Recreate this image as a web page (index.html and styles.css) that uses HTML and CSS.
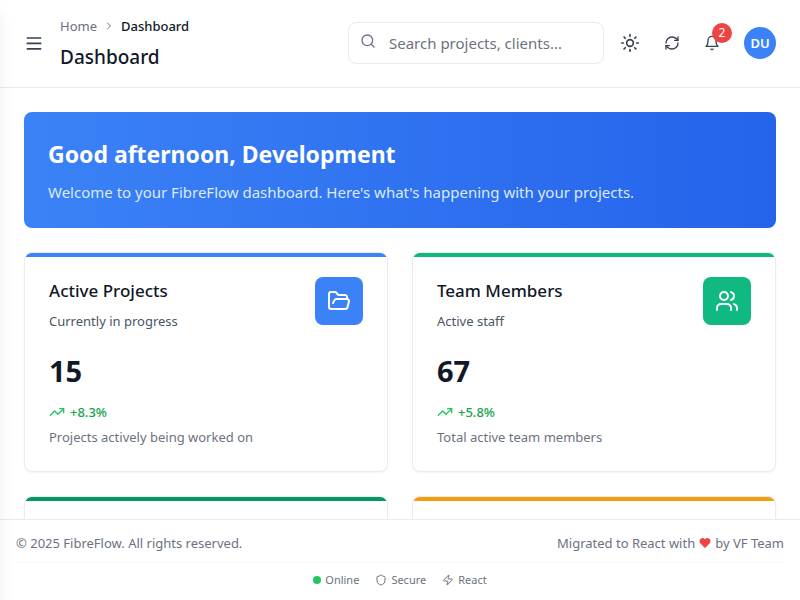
FILE: index.html
```html
<!DOCTYPE html>
<html lang="en">
<head>
<meta charset="utf-8">
<meta name="viewport" content="width=device-width, initial-scale=1">
<title>Dashboard</title>
<link rel="stylesheet" href="styles.css">
</head>
<body>
<svg class="sprite" aria-hidden="true">
  <symbol id="trend" viewBox="0 0 24 24"><path d="M22 7 13.5 15.5 8.5 10.5 2 17"/><path d="M16 7h6v6"/></symbol>
</svg>
<div class="sidebar-edge"></div>
<div class="app">
  <header class="topbar">
    <div class="topbar-left">
      <button class="icon-button" type="button" aria-label="Menu">
        <svg class="icon icon-20" viewBox="0 0 24 24"><path d="M4 6h16M4 12.500h16M4 19h16"/></svg>
      </button>
      <div class="heading">
        <nav class="breadcrumb" aria-label="Breadcrumb">
          <a href="#">Home</a>
          <svg class="icon icon-12" viewBox="0 0 24 24"><path d="m9 18 6-6-6-6"/></svg>
          <span class="current">Dashboard</span>
        </nav>
        <h1 class="page-title">Dashboard</h1>
      </div>
    </div>
    <div class="topbar-right">
      <div class="search">
        <svg class="icon icon-16 search-icon" viewBox="0 0 24 24"><circle cx="11" cy="11" r="8"/><path d="m21 21-4.3-4.3"/></svg>
        <input class="search-input" type="text" placeholder="Search projects, clients..." aria-label="Search">
      </div>
      <div class="actions">
        <button class="icon-button" type="button" aria-label="Theme">
          <svg class="icon icon-20" viewBox="0 0 24 24"><circle cx="12" cy="12" r="4"/><path d="M12 2v2M12 20v2M4.93 4.93l1.41 1.41M17.66 17.66l1.41 1.41M2 12h2M20 12h2M6.34 17.66l-1.41 1.41M19.07 4.93l-1.41 1.41"/></svg>
        </button>
        <button class="icon-button" type="button" aria-label="Refresh">
          <svg class="icon icon-16" viewBox="0 0 24 24"><path d="M3 12a9 9 0 0 1 9-9 9.75 9.75 0 0 1 6.74 2.74L21 8"/><path d="M21 3v5h-5"/><path d="M21 12a9 9 0 0 1-9 9 9.75 9.75 0 0 1-6.74-2.74L3 16"/><path d="M8 16H3v5"/></svg>
        </button>
        <button class="icon-button bell" type="button" aria-label="Notifications">
          <svg class="icon icon-16" viewBox="0 0 24 24"><path d="M6 8a6 6 0 0 1 12 0c0 7 3 9 3 9H3s3-2 3-9"/><path d="M10.3 21a1.94 1.94 0 0 0 3.4 0"/></svg>
          <span class="badge">2</span>
        </button>
        <button class="avatar" type="button">DU</button>
      </div>
    </div>
  </header>

  <main class="content">
    <section class="banner">
      <h2>Good afternoon, Development</h2>
      <p>Welcome to your FibreFlow dashboard. Here's what's happening with your projects.</p>
    </section>
    <div class="cards">
      <article class="card blue">
        <div class="card-head">
          <div>
            <h3>Active Projects</h3>
            <p class="subtitle">Currently in progress</p>
          </div>
          <span class="tile"><svg class="icon icon-24" viewBox="0 0 24 24"><path d="m6 14 1.5-2.9A2 2 0 0 1 9.24 10H20a2 2 0 0 1 1.94 2.5l-1.54 6a2 2 0 0 1-1.95 1.5H4a2 2 0 0 1-2-2V5a2 2 0 0 1 2-2h3.9a2 2 0 0 1 1.69.9l.81 1.2a2 2 0 0 0 1.67.9H18a2 2 0 0 1 2 2v2"/></svg></span>
        </div>
        <p class="value">15</p>
        <p class="trend"><svg class="icon icon-16"><use href="#trend"/></svg>+8.3%</p>
        <p class="note">Projects actively being worked on</p>
      </article>
      <article class="card green">
        <div class="card-head">
          <div>
            <h3>Team Members</h3>
            <p class="subtitle">Active staff</p>
          </div>
          <span class="tile"><svg class="icon icon-24" viewBox="0 0 24 24"><path d="M16 21v-2a4 4 0 0 0-4-4H6a4 4 0 0 0-4 4v2"/><circle cx="9" cy="7" r="4"/><path d="M22 21v-2a4 4 0 0 0-3-3.87"/><path d="M16 3.13a4 4 0 0 1 0 7.75"/></svg></span>
        </div>
        <p class="value">67</p>
        <p class="trend"><svg class="icon icon-16"><use href="#trend"/></svg>+5.8%</p>
        <p class="note">Total active team members</p>
      </article>
      <article class="card teal"></article>
      <article class="card amber"></article>
    </div>
  </main>

  <footer class="footer">
    <div class="footer-main">
      <span>© 2025 FibreFlow. All rights reserved.</span>
      <span class="credit">Migrated to React with
        <svg class="heart" viewBox="0 0 24 24" role="img" aria-label="love"><path d="M12 22 3.500 13.500C1.500 11.500 1 10 1 8a6 6 0 0 1 11-3.300A6 6 0 0 1 23 8c0 2-.5 3.500-2.500 5.500Z"/></svg>
        by VF Team</span>
    </div>
    <div class="status">
      <span class="status-item"><i class="dot"></i>Online</span>
      <span class="status-item"><svg class="icon icon-12" viewBox="0 0 24 24"><path d="M20 13c0 5-3.500 7.500-7.660 8.950a1 1 0 0 1-.67-.01C7.500 20.500 4 18 4 13V6a1 1 0 0 1 1-1c2 0 4.500-1.200 6.240-2.720a1.170 1.170 0 0 1 1.520 0C14.510 3.810 17 5 19 5a1 1 0 0 1 1 1z"/></svg>Secure</span>
      <span class="status-item"><svg class="icon icon-12" viewBox="0 0 24 24"><path d="M4 14a1 1 0 0 1-.78-1.630l9.900-10.200a.5.5 0 0 1 .86.46l-1.920 6.020A1 1 0 0 0 13 10h7a1 1 0 0 1 .78 1.630l-9.900 10.200a.5.5 0 0 1-.86-.46l1.920-6.020A1 1 0 0 0 11 14z"/></svg>React</span>
    </div>
  </footer>
</div>
</body>
</html>
```
FILE: styles.css
```css
* { box-sizing: border-box; }
body {
  margin: 0;
  font-family: "Segoe UI", "Noto Sans", "Open Sans", sans-serif;
  font-size: 13px;
  line-height: 20px;
  color: #111827;
  background: #fff;
}
h1, h2, h3, p { margin: 0; }
button { font: inherit; border: 0; padding: 0; background: none; color: inherit; cursor: pointer; }
.sprite { position: absolute; width: 0; height: 0; }

.app { display: flex; flex-direction: column; height: 100vh; }
.sidebar-edge {
  position: fixed;
  top: 0;
  bottom: 0;
  left: -256px;
  width: 256px;
  z-index: 2;
  box-shadow: 0 10px 15px rgba(0, 0, 0, 0.06);
  pointer-events: none;
}

.icon { display: block; flex: none; fill: none; stroke: currentColor; stroke-width: 2; stroke-linecap: round; stroke-linejoin: round; }
.icon-12 { width: 12px; height: 12px; }
.icon-16 { width: 16px; height: 16px; }
.icon-20 { width: 20px; height: 20px; }
.icon-24 { width: 24px; height: 24px; }

.topbar {
  display: flex;
  align-items: center;
  justify-content: space-between;
  gap: 16px;
  padding: 15px 24px 16px 16px;
  border-bottom: 1px solid #ebebeb;
}
.topbar-left { display: flex; align-items: center; gap: 8px; }
.topbar-right { display: flex; align-items: center; gap: 8px; }
.icon-button { position: relative; padding: 8px; color: #374151; }
.breadcrumb { display: flex; align-items: center; gap: 6px; margin-bottom: 7px; padding-top: 1px; color: #6b7280; }
.breadcrumb a { color: inherit; text-decoration: none; }
.breadcrumb .current { color: #111827; font-weight: 500; }
.page-title { font-size: 19px; line-height: 28px; font-weight: 500; }

.search { position: relative; width: 256px; }
.search-icon { position: absolute; left: 12px; top: 11px; color: #6b7280; }
.search-input {
  width: 100%;
  padding: 8px 16px 8px 40px;
  border: 1px solid #ebebeb;
  border-radius: 8px;
  background: #fff;
  font: inherit;
  font-size: 15px;
  line-height: 24px;
  color: #111827;
}
.search-input::placeholder { color: #6b7280; opacity: 1; }
.actions { display: flex; align-items: center; gap: 8px; }
.badge {
  position: absolute;
  top: -4px;
  right: -4px;
  width: 20px;
  height: 20px;
  border-radius: 50%;
  background: #ef4444;
  color: #fff;
  font-size: 12px;
  text-align: center;
}
.avatar {
  width: 32px;
  height: 32px;
  margin-left: 8px;
  border-radius: 50%;
  background: #3b82f6;
  color: #fff;
  font-weight: 600;
}

.content { flex: 1; min-height: 0; overflow: hidden; padding: 24px; }
.banner {
  padding: 24px;
  margin-bottom: 24px;
  border-radius: 8px;
  color: #fff;
  background: linear-gradient(to right, #3b82f6, #2563eb);
}
.banner h2 { margin-bottom: 8px; font-size: 23px; line-height: 36px; font-weight: 700; }
.banner p { font-size: 15px; line-height: 24px; color: #dbeafe; }

.cards { display: grid; grid-template-columns: 1fr 1fr; gap: 24px; }
.card {
  min-height: 220px;
  padding: 24px;
  border: 1px solid #ebebeb;
  border-radius: 8px;
  background: linear-gradient(var(--accent), var(--accent)) top / 100% 4px no-repeat, #fff;
  box-shadow: 0 1px 2px rgba(0, 0, 0, 0.05);
}
.blue { --accent: #3b82f6; }
.green { --accent: #10b981; }
.teal { --accent: #059669; }
.amber { --accent: #f59e0b; }
.card-head { display: flex; justify-content: space-between; margin-bottom: 20px; }
.card h3 { margin-bottom: 6px; font-size: 17px; line-height: 28px; font-weight: 500; }
.subtitle { color: #4b5563; }
.tile {
  display: grid;
  place-items: center;
  width: 48px;
  height: 48px;
  border-radius: 8px;
  background: var(--accent);
  color: #fff;
}
.value { margin-bottom: 11px; font-size: 29px; line-height: 40px; font-weight: 700; }
.trend { display: flex; align-items: center; gap: 5px; margin-bottom: 5px; color: #16a34a; font-weight: 500; }
.trend .icon { color: #22c55e; }
.note { color: #6b7280; }

.footer { padding: 13px 16px 10px; border-top: 1px solid #ebebeb; background: #fff; color: #6b7280; }
.footer-main { display: flex; justify-content: space-between; padding-bottom: 8px; border-bottom: 2px solid #f9fafb; }
.credit { display: flex; align-items: center; gap: 4px; }
.heart { width: 12px; height: 12px; fill: #ef4444; }
.status { display: flex; justify-content: center; gap: 16px; padding-top: 7px; font-size: 11px; }
.status-item { display: flex; align-items: center; gap: 4px; }
.dot { width: 8px; height: 8px; border-radius: 50%; background: #22c55e; }
```
